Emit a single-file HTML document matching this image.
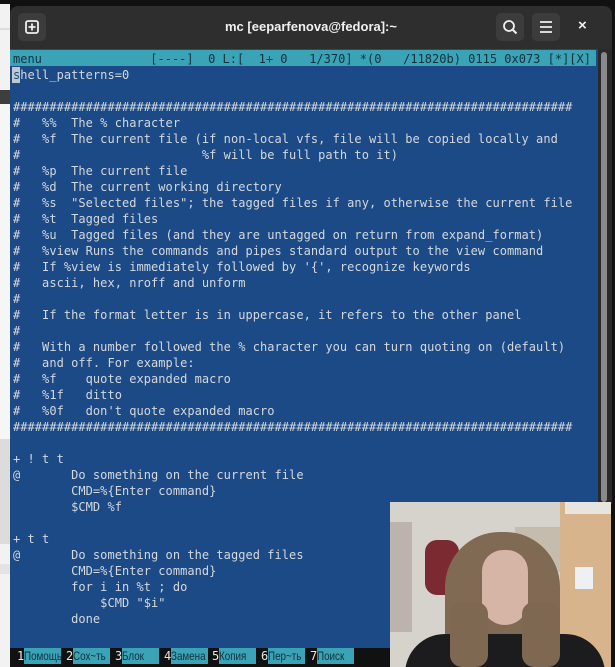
<!DOCTYPE html>
<html><head><meta charset="utf-8"><style>
*{margin:0;padding:0;box-sizing:border-box}
body{width:615px;height:667px;overflow:hidden;background:#111;position:relative;font-family:"DejaVu Sans Mono","Liberation Mono",monospace}
.abs{position:absolute}
#left{left:0;top:4px;width:10px;height:663px;background:#f2f2f2}
#title{left:10px;top:6px;width:602px;height:43px;background:#2e2e2e;border-radius:8px 8px 0 0}
.btn{position:absolute;top:7px;width:28px;height:28px;background:#3c3c3c;border-radius:5px}
#ttext{position:absolute;left:0;right:0;top:13px;text-align:center;color:#f0f0f0;font:bold 13px "Liberation Sans",sans-serif}
#term{left:10px;top:49px;width:588px;height:600px;background:#1c4a86}
#status{left:10px;top:50px;width:586px;height:16px;background:#3aa3b5}
pre{font-family:"DejaVu Sans Mono","Liberation Mono",monospace;font-size:12px;letter-spacing:0.04px;line-height:16px;color:#d4d8dc;white-space:pre}
#stext{left:13px;top:51px;color:#17303f;letter-spacing:0}
#body{left:13px;top:67px}
#sb{left:598px;top:49px;width:14px;height:455px;background:#2a2a2a}
#thumb{left:601px;top:52px;width:6px;height:450px;background:#8a8a8a;border-radius:3px}
#keys{left:10px;top:648px;width:588px;height:17px;background:#111}
.k{position:absolute;top:0;height:16px;font-size:12px;line-height:16px;color:#e6e6e6;white-space:nowrap}
.k b{font-weight:normal;display:inline-block;background:#3aa3b5;width:37px;height:16px;overflow:hidden;vertical-align:top}
.k b i{font-style:normal;display:inline-block;color:#13303c;font-family:"Liberation Sans",sans-serif;font-size:12px;transform:scaleX(0.82);transform-origin:0 50%}
#cam{left:390px;top:502px;width:221px;height:165px;background:#d6d3cd;overflow:hidden}
</style></head><body>
<div class="abs" id="left">
 <div class="abs" style="left:0;top:24px;width:10px;height:2px;background:#ddd"></div>
 <div class="abs" style="left:0;top:86px;width:10px;height:14px;background:#3e3e3e"></div>
 <div class="abs" style="left:0;top:100px;width:10px;height:340px;background:#f6f6f6"></div>
 <div class="abs" style="left:0;top:435px;width:10px;height:105px;background:#dcdcdc"></div>
 <div class="abs" style="left:0;top:560px;width:10px;height:10px;background:#e4e4e4"></div>
</div>
<div class="abs" id="title">
 <div class="btn" style="left:8px"><svg width="28" height="28"><rect x="8" y="8" width="12" height="12" rx="2" fill="none" stroke="#eee" stroke-width="1.8"/><path d="M14 10.5v7M10.5 14h7" stroke="#eee" stroke-width="1.8"/></svg></div>
 <div id="ttext">mc [eeparfenova@fedora]:~</div>
 <div class="btn" style="left:486px"><svg width="28" height="28"><circle cx="13" cy="13" r="5" fill="none" stroke="#eee" stroke-width="1.8"/><path d="M16.5 16.5l4 4" stroke="#eee" stroke-width="2"/></svg></div>
 <div class="btn" style="left:522px"><svg width="28" height="28"><path d="M8 9h12M8 14h12M8 19h12" stroke="#eee" stroke-width="1.8"/></svg></div>
 <div style="position:absolute;left:568px;top:11px;color:#eee;font:bold 15px 'Liberation Sans',sans-serif">×</div>
</div>
<div class="abs" id="term"></div>
<div class="abs" id="status"></div>
<pre class="abs" id="stext">menu               [----]  0 L:[  1+ 0   1/370] *(0   /11820b) 0115 0x073 [*][X]</pre>
<div class="abs" style="left:12px;top:67px;width:8px;height:16px;background:#c0c8d0"></div>
<pre class="abs" id="body"><span style="color:#1c4a86">s</span>hell_patterns=0

#############################################################################
#   %%  The % character
#   %f  The current file (if non-local vfs, file will be copied locally and
#                         %f will be full path to it)
#   %p  The current file
#   %d  The current working directory
#   %s  "Selected files"; the tagged files if any, otherwise the current file
#   %t  Tagged files
#   %u  Tagged files (and they are untagged on return from expand_format)
#   %view Runs the commands and pipes standard output to the view command
#   If %view is immediately followed by '{', recognize keywords
#   ascii, hex, nroff and unform
#
#   If the format letter is in uppercase, it refers to the other panel
#
#   With a number followed the % character you can turn quoting on (default)
#   and off. For example:
#   %f    quote expanded macro
#   %1f   ditto
#   %0f   don't quote expanded macro
#############################################################################

+ ! t t
@       Do something on the current file
        CMD=%{Enter command}
        $CMD %f

+ t t
@       Do something on the tagged files
        CMD=%{Enter command}
        for i in %t ; do
            $CMD "$i"
        done</pre>
<div class="abs" id="sb"></div>
<div class="abs" id="thumb"></div>
<div class="abs" id="keys">
 <div class="k" style="left:7px">1<b><i>Помощь</i></b></div>
 <div class="k" style="left:56px">2<b><i>Сох~ть</i></b></div>
 <div class="k" style="left:105px">3<b><i>Блок</i></b></div>
 <div class="k" style="left:154px">4<b><i>Замена</i></b></div>
 <div class="k" style="left:202px">5<b><i>Копия</i></b></div>
 <div class="k" style="left:251px">6<b><i>Пер~ть</i></b></div>
 <div class="k" style="left:300px">7<b><i>Поиск</i></b></div>
</div>
<div class="abs" id="cam">
 <div class="abs" style="left:170px;top:0;width:51px;height:165px;background:#d8b48c"></div>
 <div class="abs" style="left:175px;top:0;width:46px;height:12px;background:#e8e4de"></div>
 <div class="abs" style="left:125px;top:25px;width:45px;height:45px;background:#c6bcae"></div>
 <div class="abs" style="left:35px;top:38px;width:34px;height:55px;background:#7a2a30;border-radius:12px"></div>
 <div class="abs" style="left:0;top:20px;width:22px;height:110px;background:#bcb4ac"></div>
 <div class="abs" style="left:185px;top:65px;width:18px;height:22px;background:#eef0f4"></div>
 <div class="abs" style="left:55px;top:30px;width:115px;height:140px;background:#806a54;border-radius:55px 55px 25px 25px"></div>
 <div class="abs" style="left:92px;top:48px;width:46px;height:75px;background:#d6b5a6;border-radius:22px 22px 24px 24px"></div>
 <div class="abs" style="left:15px;top:132px;width:200px;height:40px;background:#1c1c1e;border-radius:40px 40px 0 0"></div>
 <div class="abs" style="left:60px;top:100px;width:38px;height:65px;background:#7e6852;border-radius:12px"></div>
 <div class="abs" style="left:132px;top:100px;width:38px;height:65px;background:#7e6852;border-radius:12px"></div>
</div>
</body></html>
